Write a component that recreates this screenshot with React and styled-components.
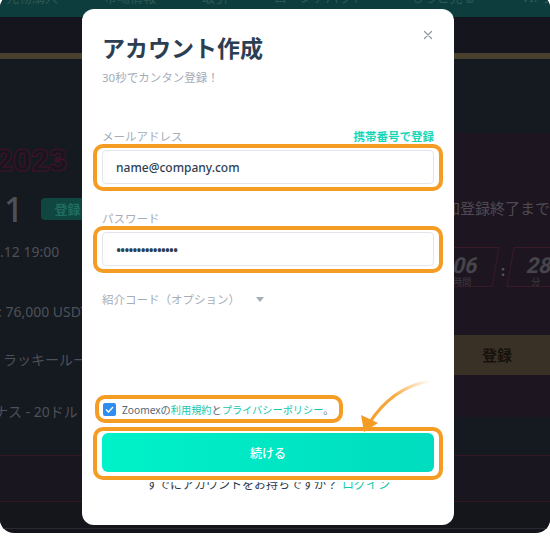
import React from 'react';
import styled, { createGlobalStyle } from 'styled-components';

const GlobalStyle = createGlobalStyle`
  html, body {
    margin: 0;
    padding: 0;
    background: #ffffff;
    font-family: "Noto Sans", "Noto Sans CJK JP", sans-serif;
  }
  #root {
    width: 550px;
    height: 536px;
    overflow: hidden;
  }
`;

const Frame = styled.div`
  position: relative;
  width: 550px;
  height: 539px;
  margin-top: -6px;
  border-radius: 14px;
  overflow: hidden;
  background: #14151c;
  display: flex;
  flex-direction: column;
`;

const TopNav = styled.div`
  height: 23px;
  background: #0d3e3d;
  display: flex;
  align-items: flex-start;
  gap: 46px;
  padding-left: 6px;
  flex-shrink: 0;
`;

const NavItem = styled.span`
  margin-top: -4px;
  font-size: 13px;
  line-height: 14px;
  color: #2f5856;
  white-space: nowrap;
`;

const DarkBand = styled.div`
  height: 36px;
  background: #14151d;
  border-bottom: 6px solid #4a402f;
  flex-shrink: 0;
`;

const Content = styled.div`
  height: 396px;
  display: flex;
  background: #151920;
  flex-shrink: 0;
`;

const LeftColumn = styled.div`
  flex: 1;
  display: flex;
  flex-direction: column;
  padding-top: 84px;
  color: #4d5159;
  white-space: nowrap;
`;

const YearText = styled.div`
  margin-left: -5px;
  font-family: Roboto, "Noto Sans", sans-serif;
  font-weight: 900;
  font-size: 31px;
  line-height: 36px;
  color: #17151d;
  -webkit-text-stroke: 1px #45122a;
`;

const DateRow = styled.div`
  margin-top: 15px;
  display: flex;
  align-items: center;
  gap: 18px;
`;

const BigNumber = styled.span`
  margin-left: 4px;
  font-size: 34px;
  font-weight: 500;
  line-height: 30px;
  color: #4c5058;
`;

const GreenBadge = styled.span`
  width: 90px;
  height: 22px;
  border-radius: 4px;
  background: #0f4640;
  color: #1f6d60;
  font-size: 13px;
  font-weight: 700;
  line-height: 22px;
  padding-left: 13px;
  box-sizing: border-box;
`;

const InfoLine = styled.div`
  margin-top: ${(p) => p.$gap}px;
  margin-left: ${(p) => p.$shift || 0}px;
  font-size: 14px;
  line-height: 20px;
  color: #4d5159;
`;

const RightPanel = styled.div`
  width: 120px;
  margin-top: 74px;
  height: 284px;
  background: #1d1620;
  display: flex;
  flex-direction: column;
  padding-top: 66px;
  box-sizing: border-box;
  white-space: nowrap;
`;

const PanelTitle = styled.div`
  font-size: 15px;
  line-height: 18px;
  color: #4f4a55;
`;

const Countdown = styled.div`
  margin-top: 30px;
  display: flex;
  align-items: center;
  margin-left: 8px;
`;

const TimeBox = styled.div`
  width: 58px;
  height: 40px;
  border: 1px solid #3b1a28;
  transform: skewX(-10deg);
  display: flex;
  flex-direction: column;
  align-items: center;
  box-sizing: border-box;
  padding-top: 7px;
  flex-shrink: 0;
`;

const TimeValue = styled.span`
  transform: skewX(4deg);
  font-family: Roboto, sans-serif;
  font-style: italic;
  font-weight: 700;
  font-size: 22px;
  line-height: 22px;
  color: #47444c;
  margin-left: ${(p) => p.$shift || 0}px;
`;

const TimeUnit = styled.span`
  transform: skewX(10deg);
  font-size: 9px;
  line-height: 10px;
  color: #3e3a42;
  margin-left: ${(p) => p.$shift || 0}px;
`;

const Colon = styled.span`
  width: 14px;
  text-align: center;
  font-size: 14px;
  font-weight: 700;
  color: #5a5660;
  padding-top: 6px;
  flex-shrink: 0;
`;

const GoldButton = styled.div`
  margin-top: 48px;
  margin-left: 10px;
  width: 114px;
  height: 40px;
  flex-shrink: 0;
  background: #3a3126;
  color: #15120e;
  font-size: 15px;
  font-weight: 700;
  line-height: 40px;
  text-align: center;
`;

const StripeBand = styled.div`
  height: 45px;
  background: #1a1620;
  border-top: 1px solid #361523;
  border-bottom: 1px solid #361523;
  flex-shrink: 0;
`;

const BottomBand = styled.div`
  height: 26px;
  background: #15151c;
  border-bottom: 1px solid #2a2a31;
  flex-shrink: 0;
`;

const ModalLayer = styled.div`
  position: absolute;
  left: 82px;
  top: 15px;
  z-index: 5;
`;

const Modal = styled.div`
  position: relative;
  width: 372px;
  height: 516px;
  background: #ffffff;
  border-radius: 12px;
  padding: 23px 20px 0;
  box-sizing: border-box;
  display: flex;
  flex-direction: column;
`;

const CloseButton = styled.div`
  position: absolute;
  top: 20px;
  right: 20px;
  width: 12px;
  height: 12px;
  display: flex;
`;

const Title = styled.h1`
  margin: 0;
  font-size: 23px;
  line-height: 32px;
  font-weight: 700;
  color: #2c3e52;
`;

const Subtitle = styled.p`
  margin: 5px 0 0;
  font-size: 11.5px;
  line-height: 18px;
  color: #a3acb7;
`;

const LabelRow = styled.div`
  margin-top: ${(p) => p.$gap}px;
  display: flex;
  justify-content: space-between;
  align-items: center;
  height: 16px;
`;

const Label = styled.span`
  font-size: 11.5px;
  color: #a5adb8;
`;

const SwitchLink = styled.span`
  font-size: 11.5px;
  font-weight: 700;
  color: #19d6b6;
`;

const Highlight = styled.div`
  position: relative;
  z-index: 2;
  background: #ffffff;
  border: 4px solid #f59c24;
  border-radius: 10px;
  box-shadow: 0 0 0 2px #ffffff;
  padding: 2px 5px 3px;
  margin: 0 -9px;
`;

const CheckHighlight = styled(Highlight)`
  align-self: flex-start;
  margin: 88px 0 0 -7px;
  padding: 0 5px 0 4px;
  height: 20px;
  display: flex;
  align-items: center;
  gap: 6px;
`;

const ButtonHighlight = styled(Highlight)`
  margin-top: 4px;
  padding: 2px 5px 4px;
`;

const Input = styled.div`
  height: 34px;
  border: 1px solid #e2e6ec;
  border-radius: 4px;
  box-sizing: border-box;
  padding-left: 13px;
  display: flex;
  align-items: center;
  font-size: ${(p) => (p.$secret ? 14 : 12)}px;
  font-weight: 500;
  color: #2e3f54;
  letter-spacing: ${(p) => (p.$secret ? '-1.2px' : '0')};
`;

const Referral = styled.div`
  margin-top: 18px;
  display: flex;
  align-items: center;
  gap: 16px;
  height: 16px;
  font-size: 11.5px;
  color: #a5adb8;
`;

const CheckBox = styled.span`
  width: 13px;
  height: 13px;
  border-radius: 2px;
  background: #2e8df0;
  display: flex;
  align-items: center;
  justify-content: center;
`;

const AgreeText = styled.span`
  font-size: 10.2px;
  color: #5a6676;
  white-space: nowrap;
`;

const Teal = styled.span`
  color: #17c9aa;
`;

const SubmitButton = styled.div`
  height: 39px;
  border-radius: 6px;
  background: linear-gradient(90deg, #00f2c9 0%, #00dcbf 100%);
  color: #ffffff;
  font-size: 12px;
  font-weight: 500;
  display: flex;
  align-items: center;
  justify-content: center;
`;

const Footer = styled.div`
  position: relative;
  z-index: 1;
  margin-top: -4px;
  text-align: center;
  font-size: 12px;
  line-height: 18px;
  color: #2e3d4f;
`;

const FooterLink = styled.span`
  color: #17c9aa;
  margin-left: 4px;
`;

const Arrow = styled.svg`
  position: absolute;
  left: 270px;
  top: 368px;
  z-index: 3;
`;

const App = () => {
  return (
    <>
      <GlobalStyle />
      <Frame>
        <TopNav>
          <NavItem>先物購入</NavItem>
          <NavItem>市場情報</NavItem>
          <NavItem>取引</NavItem>
          <NavItem>ローンチパッド</NavItem>
          <NavItem>もっと見る</NavItem>
          <NavItem>VIPプラン</NavItem>
        </TopNav>
        <DarkBand />
        <Content>
          <LeftColumn>
            <YearText>2023</YearText>
            <DateRow>
              <BigNumber>1</BigNumber>
              <GreenBadge>登録</GreenBadge>
            </DateRow>
            <InfoLine $gap={18}>.12 19:00</InfoLine>
            <InfoLine $gap={40} $shift={-2}>: 76,000 USDT</InfoLine>
            <InfoLine $gap={28} $shift={3}>ラッキールーレット</InfoLine>
            <InfoLine $gap={32} $shift={-6}>ナス - 20ドル</InfoLine>
          </LeftColumn>
          <RightPanel>
            <PanelTitle>参加登録終了まであと</PanelTitle>
            <Countdown>
              <TimeBox>
                <TimeValue $shift={-3}>06</TimeValue>
                <TimeUnit $shift={-3}>時間</TimeUnit>
              </TimeBox>
              <Colon>:</Colon>
              <TimeBox>
                <TimeValue>28</TimeValue>
                <TimeUnit>分</TimeUnit>
              </TimeBox>
            </Countdown>
            <GoldButton>登録</GoldButton>
          </RightPanel>
        </Content>
        <StripeBand />
        <BottomBand />

        <ModalLayer>
          <Modal>
            <CloseButton>
              <svg width="12" height="12" viewBox="0 0 12 12">
                <path d="M2.5 2.5 L9.5 9.5 M9.5 2.5 L2.5 9.5" stroke="#8f9aa6" strokeWidth="1.2" strokeLinecap="round" />
              </svg>
            </CloseButton>
            <Title>アカウント作成</Title>
            <Subtitle>30秒でカンタン登録！</Subtitle>

            <LabelRow $gap={41}>
              <Label>メールアドレス</Label>
              <SwitchLink>携帯番号で登録</SwitchLink>
            </LabelRow>
            <Highlight>
              <Input>name@company.com</Input>
            </Highlight>

            <LabelRow $gap={19}>
              <Label>パスワード</Label>
            </LabelRow>
            <Highlight>
              <Input $secret>•••••••••••••••</Input>
            </Highlight>

            <Referral>
              <span>紹介コード（オプション）</span>
              <svg width="8" height="5" viewBox="0 0 8 5">
                <path d="M0 0 L8 0 L4 5 Z" fill="#a5adb8" />
              </svg>
            </Referral>

            <CheckHighlight>
              <CheckBox>
                <svg width="9" height="7" viewBox="0 0 9 7">
                  <path d="M1 3.5 L3.5 6 L8 1" stroke="#ffffff" strokeWidth="1.4" fill="none" />
                </svg>
              </CheckBox>
              <AgreeText>
                Zoomexの<Teal>利用規約</Teal>と<Teal>プライバシーポリシー</Teal>。
              </AgreeText>
            </CheckHighlight>

            <ButtonHighlight>
              <SubmitButton>続ける</SubmitButton>
            </ButtonHighlight>

            <Footer>
              すでにアカウントをお持ちですか？<FooterLink>ログイン</FooterLink>
            </Footer>

            <Arrow width="90" height="60" viewBox="0 0 90 60">
              <defs>
                <linearGradient id="arrowFade" x1="1" y1="0" x2="0" y2="1">
                  <stop offset="0" stopColor="#f59c24" stopOpacity="0" />
                  <stop offset="0.45" stopColor="#f59c24" stopOpacity="0.85" />
                  <stop offset="1" stopColor="#f59c24" />
                </linearGradient>
              </defs>
              <path d="M78 4 Q40 10 16 48" stroke="url(#arrowFade)" strokeWidth="3.2" fill="none" strokeLinecap="round" />
              <path d="M12 55 L9 38 L26 46 Z" fill="#f59c24" />
            </Arrow>
          </Modal>
        </ModalLayer>
      </Frame>
    </>
  );
};

export default App;
